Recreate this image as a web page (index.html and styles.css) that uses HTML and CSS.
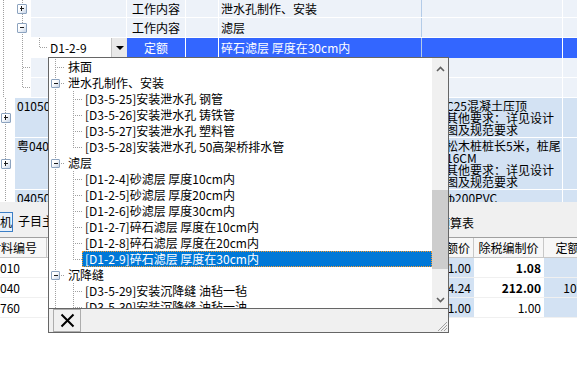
FILE: index.html
```html
<!DOCTYPE html>
<html lang="zh-CN">
<head>
  <meta charset="UTF-8">
  <meta name="viewport" content="width=device-width, initial-scale=1.0">
  <title>定额选择</title>
  <link rel="stylesheet" href="styles.css">
</head>
<body>

  <div class="sheet">
    <div class="row row-a">
      <div class="tree-cell"><span class="box plus"></span></div>
      <div class="cell code"></div>
      <div class="cell kind">工作内容</div>
      <div class="cell unit"></div>
      <div class="cell name">泄水孔制作、安装</div>
      <div class="cell feat"></div>
      <div class="cell last"></div>
    </div>
    <div class="row row-b">
      <div class="tree-cell"><span class="box"></span></div>
      <div class="cell code"></div>
      <div class="cell kind">工作内容</div>
      <div class="cell unit"></div>
      <div class="cell name">滤层</div>
      <div class="cell feat"></div>
      <div class="cell last"></div>
    </div>
    <div class="row row-c">
      <div class="tree-cell"></div>
      <div class="cell code editing">
        <span class="elbow"></span>
        <span class="code-input">D1-2-9</span>
        <span class="drop-btn"></span>
      </div>
      <div class="cell kind">定额</div>
      <div class="cell unit"></div>
      <div class="cell name">碎石滤层 厚度在30cm内</div>
      <div class="cell feat"></div>
      <div class="cell last"></div>
    </div>

    <div class="row row-d">
      <div class="tree-cell tee"></div>
      <div class="cell span"></div>
      <div class="cell feat"></div>
      <div class="cell last"></div>
    </div>
    <div class="row row-e">
      <div class="tree-cell tee end"></div>
      <div class="cell span"></div>
      <div class="cell feat"></div>
      <div class="cell last"></div>
    </div>

    <div class="row item row-f">
      <div class="root-cell"><span class="box plus"></span></div>
      <div class="cell wide">010507001001</div>
      <div class="cell feat">C25混凝土压顶<br>其他要求：详见设计<br>图及规范要求</div>
      <div class="cell last"></div>
    </div>
    <div class="row item row-g">
      <div class="root-cell"><span class="box plus"></span></div>
      <div class="cell wide">粤040301001</div>
      <div class="cell feat">松木桩桩长5米，桩尾<br>16CM<br>其他要求：详见设计<br>图及规范要求</div>
      <div class="cell last"></div>
    </div>
    <div class="row item row-h">
      <div class="root-cell"></div>
      <div class="cell wide">040504001001</div>
      <div class="cell feat">φ200PVC</div>
      <div class="cell last"></div>
    </div>
  </div>

  <div class="panel">
    <div class="tabs">
      <span class="tab active">人材机</span>
      <span class="tab">子目主材设备</span>
    </div>
    <div class="caption">预算表</div>
  </div>

  <div class="grid-head">
    <div class="gc c1"><span class="clip">材料编号</span></div>
    <div class="gc c2"></div>
    <div class="gc c3">定额价</div>
    <div class="gc c4">除税编制价</div>
    <div class="gc c5">定额价</div>
  </div>
  <div class="grid-row">
    <div class="gc c1">010</div>
    <div class="gc c2"></div>
    <div class="gc c3">1.00</div>
    <div class="gc c4 strong">1.08</div>
    <div class="gc c5">1.00</div>
  </div>
  <div class="grid-row">
    <div class="gc c1">040</div>
    <div class="gc c2"></div>
    <div class="gc c3">4.24</div>
    <div class="gc c4 strong">212.00</div>
    <div class="gc c5">107.00</div>
  </div>
  <div class="grid-row">
    <div class="gc c1">760</div>
    <div class="gc c2"></div>
    <div class="gc c3">1.00</div>
    <div class="gc c4">1.00</div>
    <div class="gc c5">1.00</div>
  </div>

  <!-- dropdown with the quota tree -->
  <div class="picker">
    <div class="picker-main">
      <div class="tree">
        <div class="node"><span class="rail leaf"></span><span class="label">抹面</span></div>
        <div class="node"><span class="rail open"><span class="box"></span></span><span class="label">泄水孔制作、安装</span></div>
        <div class="node"><span class="rail"></span><span class="rail sub"></span><span class="label">[D3-5-25]安装泄水孔 钢管</span></div>
        <div class="node"><span class="rail"></span><span class="rail sub"></span><span class="label">[D3-5-26]安装泄水孔 铸铁管</span></div>
        <div class="node"><span class="rail"></span><span class="rail sub"></span><span class="label">[D3-5-27]安装泄水孔 塑料管</span></div>
        <div class="node"><span class="rail"></span><span class="rail sub end"></span><span class="label">[D3-5-28]安装泄水孔 50高架桥排水管</span></div>
        <div class="node"><span class="rail open"><span class="box"></span></span><span class="label">滤层</span></div>
        <div class="node"><span class="rail"></span><span class="rail sub"></span><span class="label">[D1-2-4]砂滤层 厚度10cm内</span></div>
        <div class="node"><span class="rail"></span><span class="rail sub"></span><span class="label">[D1-2-5]砂滤层 厚度20cm内</span></div>
        <div class="node"><span class="rail"></span><span class="rail sub"></span><span class="label">[D1-2-6]砂滤层 厚度30cm内</span></div>
        <div class="node"><span class="rail"></span><span class="rail sub"></span><span class="label">[D1-2-7]碎石滤层 厚度在10cm内</span></div>
        <div class="node"><span class="rail"></span><span class="rail sub"></span><span class="label">[D1-2-8]碎石滤层 厚度在20cm内</span></div>
        <div class="node selected"><span class="rail"></span><span class="rail sub end"></span><span class="label">[D1-2-9]碎石滤层 厚度在30cm内</span></div>
        <div class="node"><span class="rail open"><span class="box"></span></span><span class="label">沉降缝</span></div>
        <div class="node"><span class="rail"></span><span class="rail sub"></span><span class="label">[D3-5-29]安装沉降缝 油毡一毡</span></div>
        <div class="node"><span class="rail"></span><span class="rail sub"></span><span class="label">[D3-5-30]安装沉降缝 油毡一油</span></div>
      </div>
      <div class="vscroll">
        <div class="sb-btn up">
          <svg width="9" height="6" viewBox="0 0 9 6"><path d="M1 5 L4.5 1.5 L8 5" fill="none" stroke="#606060" stroke-width="1.6"/></svg>
        </div>
        <div class="sb-track"><div class="sb-thumb"></div></div>
        <div class="sb-btn">
          <svg width="9" height="6" viewBox="0 0 9 6"><path d="M1 1 L4.5 4.5 L8 1" fill="none" stroke="#606060" stroke-width="1.6"/></svg>
        </div>
      </div>
    </div>
    <div class="picker-foot">
      <button class="close-btn">
        <svg width="15" height="15" viewBox="0 0 15 15"><path d="M1.5 1.5 L13.5 13.5 M13.5 1.5 L1.5 13.5" stroke="#000" stroke-width="2"/></svg>
      </button>
      <span class="grip">
        <svg width="12" height="12" viewBox="0 0 12 12"><path d="M11 2 L2 11 M11 5 L5 11 M11 8 L8 11" stroke="#a0a0a0" stroke-width="1"/></svg>
      </span>
    </div>
  </div>

</body>
</html>
```

FILE: styles.css
```css
:root {
  --dv: repeating-linear-gradient(to bottom, #a0a0a0 0 1px, transparent 1px 2px);
  --dh: repeating-linear-gradient(to right, #a0a0a0 0 1px, transparent 1px 2px);
}

* {
  box-sizing: border-box;
}

body {
  margin: 0;
  width: 577px;
  height: 391px;
  overflow: hidden;
  position: relative;
  background: #fff;
  color: #000;
  font-family: "Noto Sans CJK SC", "Noto Sans", sans-serif;
  font-size: 12px;
  line-height: 16px;
}

/* main sheet */
.sheet {
  width: 640px;
}

.row {
  display: flex;
  height: 20px;
  border-bottom: 1px solid #fff;
  white-space: nowrap;
}

.row-a {
  height: 18px;
}

.row-c {
  border-bottom: 0;
}

.cell {
  flex: none;
  overflow: hidden;
  background: #edf2f9;
  border-right: 1px solid #fff;
  line-height: 19px;
}

.row-a .cell {
  line-height: 17px;
}

.code { width: 96px; }
.kind { width: 59px; padding-left: 5px; }
.unit { width: 33px; }
.name { width: 203px; padding-left: 2px; border-right-color: #b3cbe8; }
.feat { width: 141px; }
.last { flex: 1; }
.span { width: 391px; }
.wide { width: 407px; padding-left: 2px; }

.row-c .cell {
  background: #3366ff;
  color: #fff;
}

.row-c .kind {
  text-align: center;
  padding-left: 0;
}

.row-c .code.editing {
  display: flex;
  background: #fff;
  color: #000;
  border-right: 0;
  width: 96px;
}

.elbow {
  width: 16px;
  background: var(--dv) 8px 0 / 1px 10px no-repeat, var(--dh) 9px 9px / 7px 1px no-repeat;
}

.code-input {
  flex: 1;
  padding-left: 3px;
}

.drop-btn {
  width: 16px;
  background: #e9e9e9;
  border-left: 1px solid #c4c4c4;
  display: flex;
  align-items: center;
  justify-content: center;
}

.drop-btn::before {
  content: "";
  border-left: 4px solid transparent;
  border-right: 4px solid transparent;
  border-top: 4px solid #000;
}

/* tree gutter on the left */
.tree-cell {
  flex: none;
  width: 31px;
  display: flex;
  align-items: center;
  padding-left: 17px;
  background: var(--dv) 3px 0 / 1px 100% no-repeat, var(--dv) 22px 0 / 1px 100% no-repeat;
}

.tree-cell.tee {
  background: var(--dv) 3px 0 / 1px 100% no-repeat, var(--dv) 22px 0 / 1px 100% no-repeat, var(--dh) 23px 9px / 8px 1px no-repeat;
}

.tree-cell.tee.end {
  background: var(--dv) 3px 0 / 1px 100% no-repeat, var(--dv) 22px 0 / 1px 10px no-repeat, var(--dh) 23px 9px / 8px 1px no-repeat;
}

.root-cell {
  flex: none;
  width: 15px;
  padding: 0 0 0 1px;
  display: flex;
  align-items: center;
  background: var(--dv) 5px 0 / 1px 100% no-repeat;
}

.row-f { height: 40px; }
.row-g { height: 52px; }
.row-h { height: 12px; border-bottom: 0; }

.item .cell {
  background: #d3e2f3;
  line-height: 12px;
  padding-top: 2px;
}

.item .feat {
  padding-left: 24px;
}

.box {
  position: relative;
  flex: none;
  width: 10px;
  height: 10px;
  border: 1px solid #8ca3bf;
  border-radius: 1px;
  background: linear-gradient(135deg, #fff 35%, #c9d6e8);
}

.box::before {
  content: "";
  position: absolute;
  left: 2px;
  top: 3px;
  width: 4px;
  height: 2px;
  border-top: 1px solid #1c1c1c;
}

.box.plus::after {
  content: "";
  position: absolute;
  left: 3px;
  top: 1px;
  width: 2px;
  height: 5px;
  border-left: 1px solid #1c1c1c;
}

/* lower panel */
.panel {
  display: flex;
  height: 35px;
  padding-top: 10px;
  background: #f0f0f0;
  white-space: nowrap;
}

.tabs {
  width: 438px;
  display: flex;
  align-items: flex-start;
}

.tab {
  height: 20px;
  line-height: 18px;
  margin-left: 5px;
}

.tab.active {
  margin-left: -26px;
  padding: 0 0 0 1px;
  border: 1px solid #3c7fc6;
  background: #e8f1fb;
}

.caption {
  padding-top: 3px;
}

.grid-head,
.grid-row {
  display: flex;
  width: 604px;
  white-space: nowrap;
}

.grid-head {
  height: 21px;
  border-top: 1px solid #a0a0a0;
  border-bottom: 1px solid #c8c8c8;
  background: #f7f7f7;
}

.grid-row {
  height: 20px;
  border-bottom: 1px solid #f0f0f0;
}

.gc {
  flex: none;
  overflow: hidden;
  line-height: 19px;
}

.c1 { width: 47px; }
.c2 { width: 353px; }
.c3 { width: 74px; text-align: right; padding-right: 3px; }
.c4 { width: 70px; text-align: right; padding-right: 3px; }
.c5 { width: 60px; text-align: right; padding-right: 4px; }

.grid-head .gc {
  border-right: 1px solid #c8c8c8;
}

.grid-head .c4,
.grid-head .c5 {
  text-align: center;
  padding-right: 0;
}

.clip {
  margin-left: -11px;
}

.grid-row .c3,
.grid-row .c5 {
  background: #d3e2f3;
}

.strong {
  font-weight: bold;
}

/* dropdown */
.picker {
  position: absolute;
  left: 48px;
  top: 57px;
  width: 401px;
  height: 276px;
  border: 1px solid #666;
  background: #fff;
  display: flex;
  flex-direction: column;
}

.picker-main {
  display: flex;
  height: 250px;
}

.tree {
  flex: 1;
  padding-top: 1px;
  overflow: hidden;
}

.node {
  display: flex;
  height: 16px;
  white-space: nowrap;
}

.rail {
  flex: none;
  width: 16px;
  height: 16px;
  display: flex;
  align-items: center;
  background: var(--dv) 6px 0 / 1px 16px no-repeat;
}

.rail.leaf {
  background: var(--dv) 6px 0 / 1px 16px no-repeat, var(--dh) 8px 8px / 8px 1px no-repeat;
}

.rail.open {
  padding-left: 2px;
  background: var(--dv) 6px 0 / 1px 16px no-repeat, var(--dh) 12px 8px / 4px 1px no-repeat;
}

.rail.open .box {
  width: 9px;
  height: 9px;
}

.rail.sub {
  width: 17px;
  background: var(--dv) 8px 0 / 1px 16px no-repeat, var(--dh) 10px 8px / 7px 1px no-repeat;
}

.rail.sub.end {
  background: var(--dv) 8px 0 / 1px 9px no-repeat, var(--dh) 10px 8px / 7px 1px no-repeat;
}

.label {
  padding: 0 3px;
  line-height: 16px;
}

.selected .label {
  flex: 1;
  background: #0078d7;
  color: #fff;
  border: 1px dotted #f59a2e;
  padding: 0 2px;
  line-height: 14px;
}

.vscroll {
  width: 16px;
  background: #f0f0f0;
  display: flex;
  flex-direction: column;
}

.sb-btn {
  height: 17px;
  display: flex;
  align-items: center;
  justify-content: center;
}

.sb-btn.up {
  height: 21px;
}

.sb-track {
  flex: 1;
}

.sb-thumb {
  margin-top: 111px;
  height: 79px;
  background: #cdcdcd;
}

.picker-foot {
  flex: 1;
  display: flex;
  padding-left: 4px;
  border-top: 1px solid #666;
  background: #f0f0f0;
}

.close-btn {
  width: 28px;
  padding: 0;
  border: 1px solid #adadad;
  background: #f0f0f0;
  display: flex;
  align-items: center;
  justify-content: center;
}

.grip {
  margin-left: auto;
  align-self: flex-end;
  display: flex;
}
```
